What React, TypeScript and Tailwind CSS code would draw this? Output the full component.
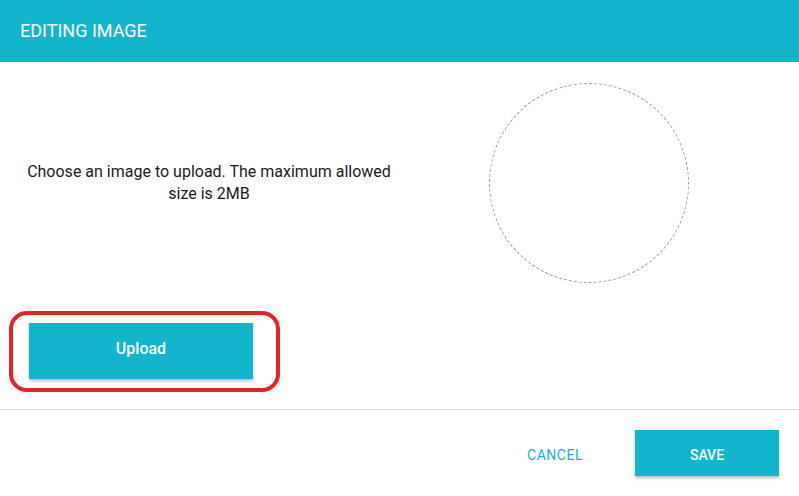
export default function App() {
  return (
    <div className="w-[799px] h-[496px] bg-white font-['Roboto',sans-serif] flex flex-col overflow-hidden">
      <div className="h-[62px] bg-[#12b5cc] flex items-center px-5 shrink-0">
        <h1 className="text-white text-[18px] leading-none">EDITING IMAGE</h1>
      </div>

      <div className="h-[347px] flex shrink-0">
        <div className="w-[418px] flex flex-col">
          <p className="w-[378px] ml-5 mt-[99px] text-center text-[16px] leading-[22px] text-[#1a1a1a]">
            Choose an image to upload. The maximum allowed size is 2MB
          </p>
          <div className="relative ml-[29px] mt-[118px] w-[224px]">
            <button className="w-[224px] h-[56px] pb-1 bg-[#12b5cc] text-white text-[16px] font-medium shadow-[0_2px_3px_rgba(0,0,0,0.28)]">
              Upload
            </button>
            <div className="absolute -top-3 -bottom-[13px] -left-5 -right-[27px] border-4 border-[#e8202a] rounded-[18px] pointer-events-none" />
          </div>
        </div>
        <div className="flex-1">
          <div className="ml-[71px] mt-[21px] w-[200px] h-[200px] rounded-full border border-dashed border-[#9a9a9a]" />
        </div>
      </div>

      <div className="h-px bg-[#dedede] shrink-0" />

      <div className="flex-1 flex justify-end items-start pt-5 pr-5">
        <button className="w-[106px] h-[46px] pt-1 mr-[27px] text-[#12b5cc] text-[14px] tracking-[0.5px]">
          CANCEL
        </button>
        <button className="w-[144px] h-[46px] pt-1 bg-[#12b5cc] text-white text-[14px] font-medium shadow-[0_2px_3px_rgba(0,0,0,0.28)]">
          SAVE
        </button>
      </div>
    </div>
  );
}
